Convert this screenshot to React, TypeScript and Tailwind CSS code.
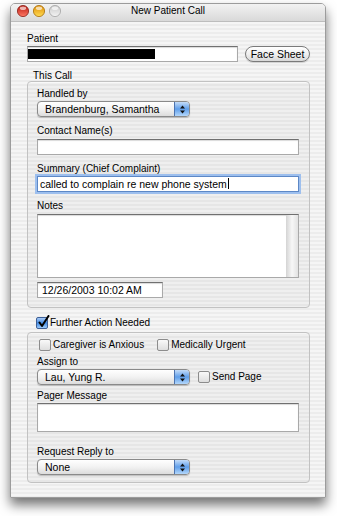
import React from "react"

const field =
  "border border-[#a9a9a9] border-t-[#707070] bg-white shadow-[inset_0_1px_1px_rgba(0,0,0,0.15)]"

function Light({ kind }: { kind: "red" | "yellow" | "gray" }) {
  const c = {
    red: { rim: "#8a1f18", top: "#b8160e", bot: "#ff7a66" },
    yellow: { rim: "#a86f08", top: "#de8c05", bot: "#ffdc55" },
    gray: { rim: "#a3a3a3", top: "#c8c8c8", bot: "#f4f4f4" },
  }[kind]
  const id = "g-" + kind
  return (
    <svg width="12" height="12" viewBox="0 0 12 12">
      <defs>
        <linearGradient id={id} x1="0" y1="0" x2="0" y2="1">
          <stop offset="0" stopColor={c.top} />
          <stop offset="1" stopColor={c.bot} />
        </linearGradient>
      </defs>
      <circle cx="6" cy="6" r="5.6" fill={`url(#${id})`} stroke={c.rim} strokeWidth="0.8" />
      <ellipse cx="6" cy="3.2" rx="3.2" ry="1.8" fill="white" opacity="0.65" />
    </svg>
  )
}

function Popup({ value }: { value: string }) {
  return (
    <div className="flex h-[16px] w-[153px] shrink-0 overflow-hidden rounded-[4px] border border-[#8a8a8a] bg-gradient-to-b from-white via-[#f2f2f2] to-[#dcdcdc] shadow-[0_1px_1px_rgba(0,0,0,0.2)]">
      <div className="flex-1 truncate pl-[7px] text-[10.5px] leading-[14px]">{value}</div>
      <div className="flex w-[15px] items-center justify-center border-l border-[#4d74b0] bg-gradient-to-b from-[#c4dcf8] via-[#5f9ee9] to-[#b3d7fb]">
        <svg width="7" height="11" viewBox="0 0 7 11">
          <path d="M3.5 1.5 L6 4.5 L1 4.5 Z" fill="#111" />
          <path d="M1 6.5 L6 6.5 L3.5 9.5 Z" fill="#111" />
        </svg>
      </div>
    </div>
  )
}

function Check({ checked, label }: { checked?: boolean; label: string }) {
  return (
    <div className="flex items-center gap-[2px]">
      <div
        className={
          "relative h-[12px] w-[12px] shrink-0 rounded-[2px] border " +
          (checked
            ? "border-[#3d5f96] bg-gradient-to-b from-[#a8cbf6] via-[#3f88e2] to-[#9ccbfb]"
            : "border-[#8c8c8c] bg-gradient-to-b from-[#f9f9f9] to-[#dedede]")
        }
      >
        {checked && (
          <svg className="absolute left-[1px] top-[-3px]" width="12" height="13" viewBox="0 0 12 13">
            <path d="M1.5 7.5 L4 11 L10.5 1" fill="none" stroke="#000" strokeWidth="2" strokeLinecap="round" strokeLinejoin="round" />
          </svg>
        )}
      </div>
      <span className="text-[10px] leading-[12px]">{label}</span>
    </div>
  )
}

function Label({ children, className = "" }: { children: React.ReactNode; className?: string }) {
  return <div className={"text-[10px] leading-[12px] " + className}>{children}</div>
}

export default function App() {
  return (
    <div className="min-h-screen bg-white pl-[10px] pt-[3px] font-['Liberation_Sans',Arial,sans-serif] text-black">
      <div className="flex h-[495px] w-[316px] flex-col overflow-hidden rounded-t-[5px] border border-[#9c9c9c] bg-[repeating-linear-gradient(180deg,#ececec_0px,#ececec_2px,#f5f5f5_2px,#f5f5f5_4px)] shadow-[0_7px_12px_rgba(0,0,0,0.55)]">
        {/* title bar */}
        <div className="grid h-[18px] shrink-0 grid-cols-[1fr_auto_1fr] border-b border-[#bdbdbd] bg-gradient-to-b from-[#f2f2f2] to-[#d9d9d9]">
          <div className="flex gap-[4px] pl-[6px] pt-[1px]">
            <Light kind="red" />
            <Light kind="yellow" />
            <Light kind="gray" />
          </div>
          <div className="pt-[1px] text-[10px] leading-[12px]">New Patient Call</div>
          <div />
        </div>

        <div className="flex flex-col pl-[16px] pr-[15px]">
          <Label className="mt-[11px]">Patient</Label>
          <div className="mt-[1px] flex items-center gap-[7px]">
            <div className={field + " flex h-[16px] w-[211px] items-center"}>
              <div className="h-[10px] w-[127px] bg-black" />
            </div>
            <button className="h-[16px] w-[65px] rounded-full border border-[#7a7a7a] bg-gradient-to-b from-white via-[#f0f0f0] to-[#d8d8d8] text-[10.5px] leading-[14px] shadow-[0_1px_1px_rgba(0,0,0,0.15)]">
              Face Sheet
            </button>
          </div>

          <div className="mt-[8px] pl-[6px] text-[10px] leading-[11px]">This Call</div>
          <div className="flex flex-col rounded-[4px] border border-[#c2c2c2] bg-black/[0.025] pb-[9px] pl-[9px] pr-[10px] pt-[6px] shadow-[inset_0_1px_0_rgba(255,255,255,0.6)]">
            <Label>Handled by</Label>
            <div className="mt-[1px]">
              <Popup value="Brandenburg, Samantha" />
            </div>
            <Label className="mt-[8px]">Contact Name(s)</Label>
            <div className={field + " mt-[2px] h-[16px]"} />
            <Label className="mt-[8px]">Summary (Chief Complaint)</Label>
            <div className="mt-[1px] h-[16px] border border-[#5d88c6] bg-white pl-[2px] text-[10.5px] leading-[14px] shadow-[0_0_0_2px_#9dbfee]">
              called to complain re new phone system<span className="ml-[1px] inline-block h-[11px] w-px translate-y-[1px] bg-black" />
            </div>
            <Label className="mt-[8px]">Notes</Label>
            <div className={field + " mt-[2px] flex h-[64px] justify-end"}>
              <div className="w-[12px] bg-gradient-to-r from-[#d4d4d4] via-[#f7f7f7] to-[#e2e2e2]" />
            </div>
            <div className={field + " mt-[4px] h-[16px] w-[126px] pl-[4px] text-[10.5px] leading-[14px]"}>
              12/26/2003 10:02 AM
            </div>
          </div>

          <div className="ml-[9px] mt-[9px]">
            <Check checked label="Further Action Needed" />
          </div>
          <div className="mt-[3px] flex flex-col rounded-[4px] border border-[#c2c2c2] bg-black/[0.025] pb-[7px] pl-[9px] pr-[10px] pt-[6px] shadow-[inset_0_1px_0_rgba(255,255,255,0.6)]">
            <div className="ml-[2px] flex gap-[13px]">
              <Check label="Caregiver is Anxious" />
              <Check label="Medically Urgent" />
            </div>
            <Label className="mt-[5px]">Assign to</Label>
            <div className="mt-[1px] flex items-center gap-[8px]">
              <Popup value="Lau, Yung R." />
              <Check label="Send Page" />
            </div>
            <Label className="mt-[5px]">Pager Message</Label>
            <div className={field + " mt-[1px] h-[29px]"} />
            <Label className="mt-[14px]">Request Reply to</Label>
            <div className="mt-[1px]">
              <Popup value="None" />
            </div>
          </div>
        </div>
      </div>
    </div>
  )
}
